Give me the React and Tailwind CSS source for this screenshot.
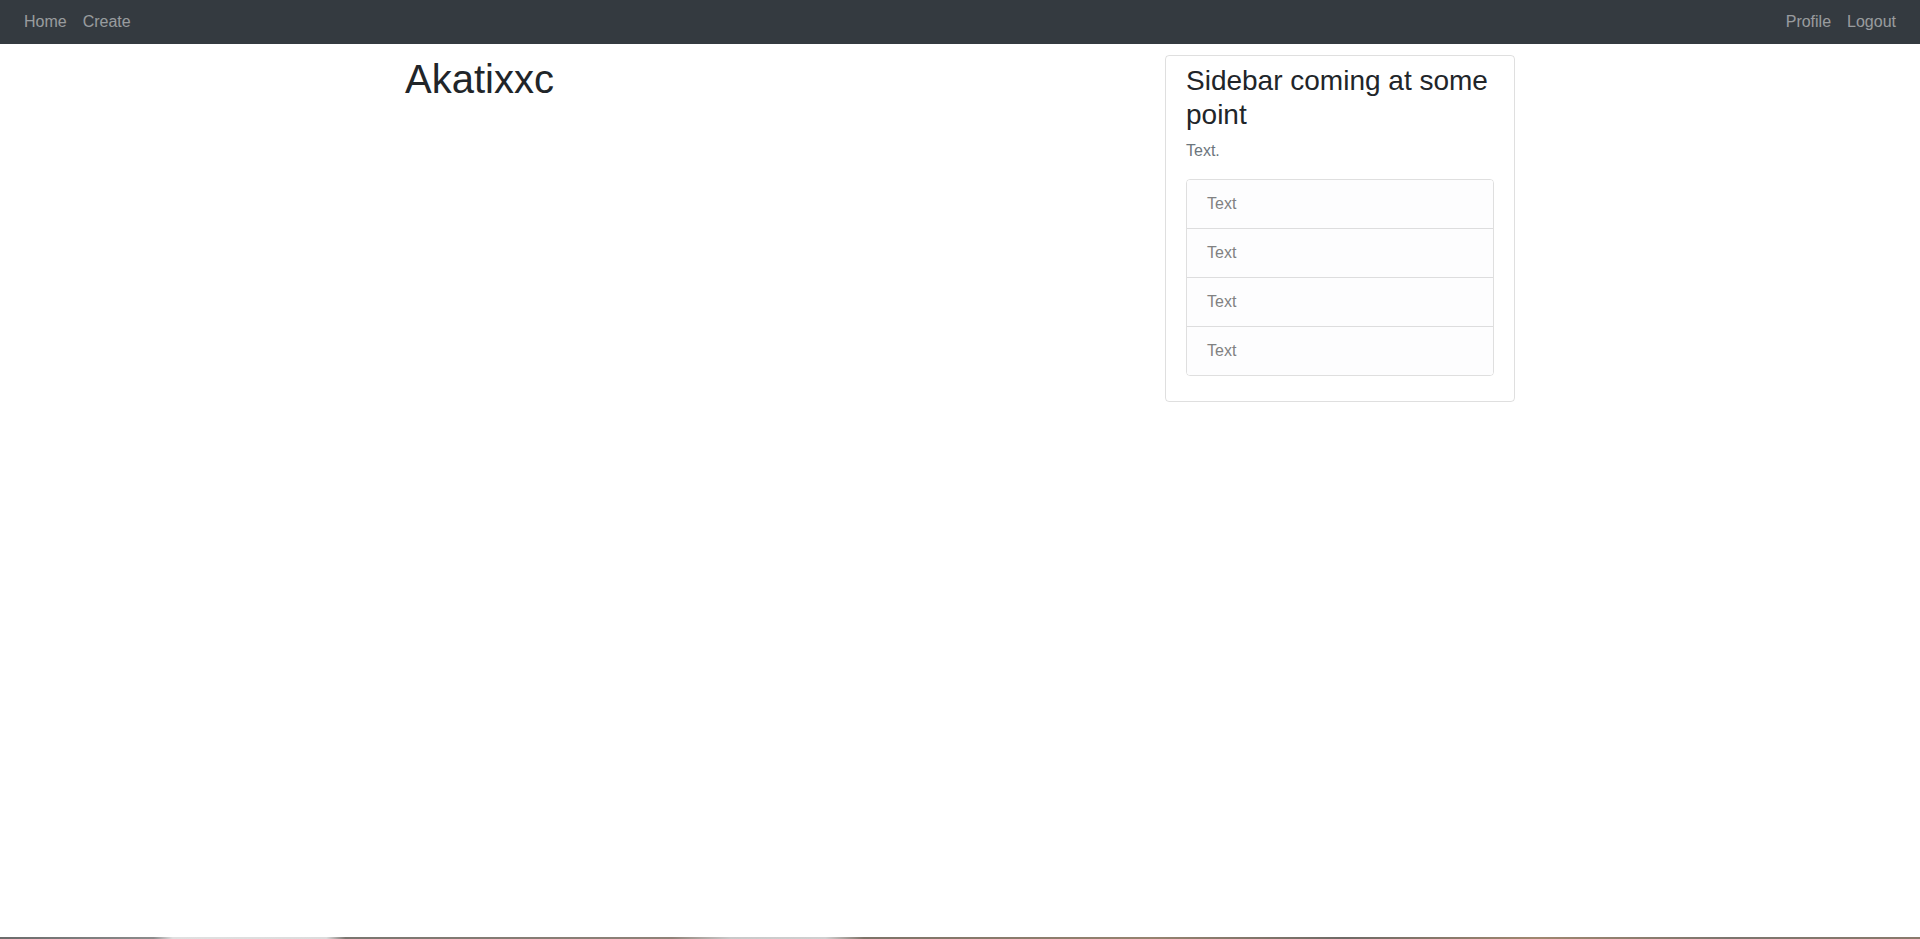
const navLinks = ['Home', 'Create'];
const userLinks = ['Profile', 'Logout'];
const sidebarItems = ['Text', 'Text', 'Text', 'Text'];

const App = () => {
  return (
    <div className="flex min-h-screen flex-col bg-white font-['Liberation_Sans',Arial,sans-serif] text-[#212529]">
      {/* Top navbar */}
      <nav className="flex h-[44px] items-center justify-between bg-[#343a40] px-4 text-base">
        <div className="flex">
          {navLinks.map((label) => (
            <a key={label} href="#" className="px-2 leading-6 text-white/50 hover:text-white/75">
              {label}
            </a>
          ))}
        </div>
        <div className="flex">
          {userLinks.map((label) => (
            <a key={label} href="#" className="px-2 leading-6 text-white/50 hover:text-white/75">
              {label}
            </a>
          ))}
        </div>
      </nav>

      {/* Page content */}
      <main className="flex-1">
        <div className="mx-auto flex w-[1140px] pt-[11px]">
          <div className="w-[760px] px-[15px]">
            <h1 className="text-[40px] font-medium leading-[1.2]">Akatixxc</h1>
          </div>

          <div className="w-[380px] px-[15px]">
            {/* Sidebar card */}
            <div className="rounded-[4px] border border-black/[0.125] px-5 pb-[25px] pt-2">
              <h3 className="mb-2 text-[28px] font-medium leading-[1.2]">Sidebar coming at some point</h3>
              <p className="mb-4 text-base leading-6 text-[#6c757d]">Text.</p>
              <ul className="overflow-hidden rounded-[4px] border border-black/[0.125]">
                {sidebarItems.map((item, idx) => (
                  <li
                    key={idx}
                    className="border-b border-black/[0.125] bg-[#fdfdfe] px-5 py-3 text-base leading-6 text-[#818182] last:border-b-0"
                  >
                    {item}
                  </li>
                ))}
              </ul>
            </div>
          </div>
        </div>
      </main>

      {/* Desktop strip peeking under the window */}
      <div className="h-[2px] bg-[linear-gradient(90deg,#6b6b6b_0%,#8c8c8c_8%,#e0e0e0_9%,#dcdcdc_17%,#7a7670_18%,#8f8278_35%,#c9c9c9_38%,#d0d0d0_43%,#7d7368_45%,#96836f_60%,#6f6a66_70%,#a0876f_80%,#7c756e_90%,#8a7a6c_100%)]" />
    </div>
  );
};

export default App;
